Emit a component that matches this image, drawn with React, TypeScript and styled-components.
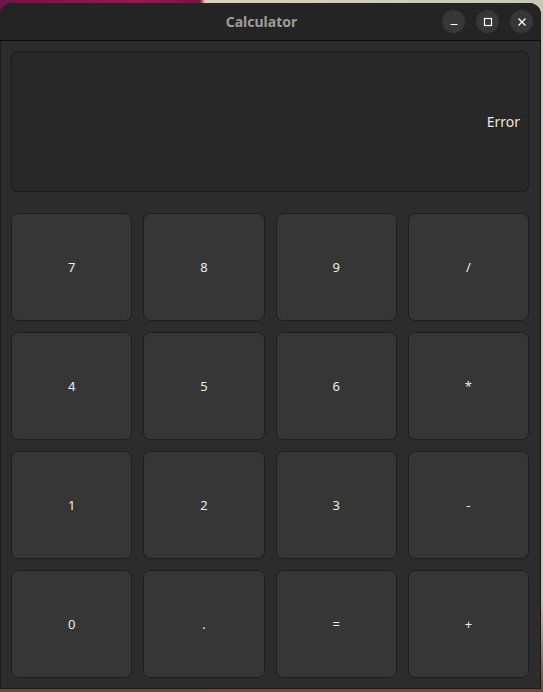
import React from 'react'
import styled, { createGlobalStyle } from 'styled-components'

const GlobalStyle = createGlobalStyle`
  html, body {
    margin: 0;
    padding: 0;
    height: 100%;
  }
  body {
    background:
      linear-gradient(90deg, #6e1648 0px, #8f1c4c 140px, #6b1a45 200px, #d9d3bd 205px, #c9c7b8 543px);
    font-family: 'Noto Sans', 'DejaVu Sans', sans-serif;
    overflow: hidden;
  }
`

const Desk = styled.div`
  width: 543px;
  height: 692px;
  padding: 3px 2px 3px 0;
  box-sizing: border-box;
  background: linear-gradient(180deg, rgba(0,0,0,0) 0px, rgba(0,0,0,0) 600px, #6a4a3a 692px);
`

const Window = styled.div`
  width: 541px;
  height: 686px;
  display: flex;
  flex-direction: column;
  background: #2c2c2c;
  border-radius: 12px 12px 0 0;
  overflow: hidden;
  box-shadow: inset 0 0 0 1px #1a1a1a;
`

const HeaderBar = styled.div`
  height: 37px;
  flex: none;
  background: #242424;
  border-bottom: 1px solid #0c0c0c;
  display: flex;
  align-items: center;
  justify-content: center;
  position: relative;
`

const Title = styled.div`
  color: #9c9c9c;
  font-size: 14px;
  font-weight: 700;
  margin-right: 18px;
`

const Controls = styled.div`
  position: absolute;
  right: 8px;
  top: 7px;
  display: flex;
  gap: 11px;
`

const CircleButton = styled.div`
  width: 23px;
  height: 23px;
  border-radius: 50%;
  background: #373737;
  display: flex;
  align-items: center;
  justify-content: center;
`

const Content = styled.div`
  flex: 1;
  padding: 10px 12px 11px 11px;
  display: flex;
  flex-direction: column;
  gap: 21px;
`

const Display = styled.div`
  height: 141px;
  box-sizing: border-box;
  background: #282828;
  border: 1px solid #1b1b1b;
  border-radius: 6px;
  display: flex;
  align-items: center;
  justify-content: flex-end;
  padding-right: 8px;
  color: #e6e6e6;
  font-size: 14px;
`

const Keypad = styled.div`
  display: grid;
  grid-template-columns: repeat(4, 1fr);
  grid-auto-rows: 108px;
  gap: 11px;
`

const Key = styled.div`
  box-sizing: border-box;
  background: #363636;
  border: 1px solid #1e1e1e;
  border-radius: 7px;
  display: flex;
  align-items: center;
  justify-content: center;
  color: #ececec;
  font-size: 13px;
`

const keys = ['7', '8', '9', '/', '4', '5', '6', '*', '1', '2', '3', '-', '0', '.', '=', '+']

const App: React.FC = () => {
  return (
    <>
      <GlobalStyle />
      <Desk>
        <Window>
          <HeaderBar>
            <Title>Calculator</Title>
            <Controls>
              <CircleButton>
                <svg width="10" height="10" viewBox="0 0 10 10">
                  <path d="M1.5 7.5h7" stroke="#fff" strokeWidth="1.2" />
                </svg>
              </CircleButton>
              <CircleButton>
                <svg width="10" height="10" viewBox="0 0 10 10">
                  <rect x="1.5" y="1.5" width="7" height="7" fill="none" stroke="#fff" strokeWidth="1.2" />
                </svg>
              </CircleButton>
              <CircleButton>
                <svg width="10" height="10" viewBox="0 0 10 10">
                  <path d="M1.5 1.5l7 7M8.5 1.5l-7 7" stroke="#fff" strokeWidth="1.3" />
                </svg>
              </CircleButton>
            </Controls>
          </HeaderBar>
          <Content>
            <Display>Error</Display>
            <Keypad>
              {keys.map((k) => (
                <Key key={k}>{k}</Key>
              ))}
            </Keypad>
          </Content>
        </Window>
      </Desk>
    </>
  )
}

export default App
